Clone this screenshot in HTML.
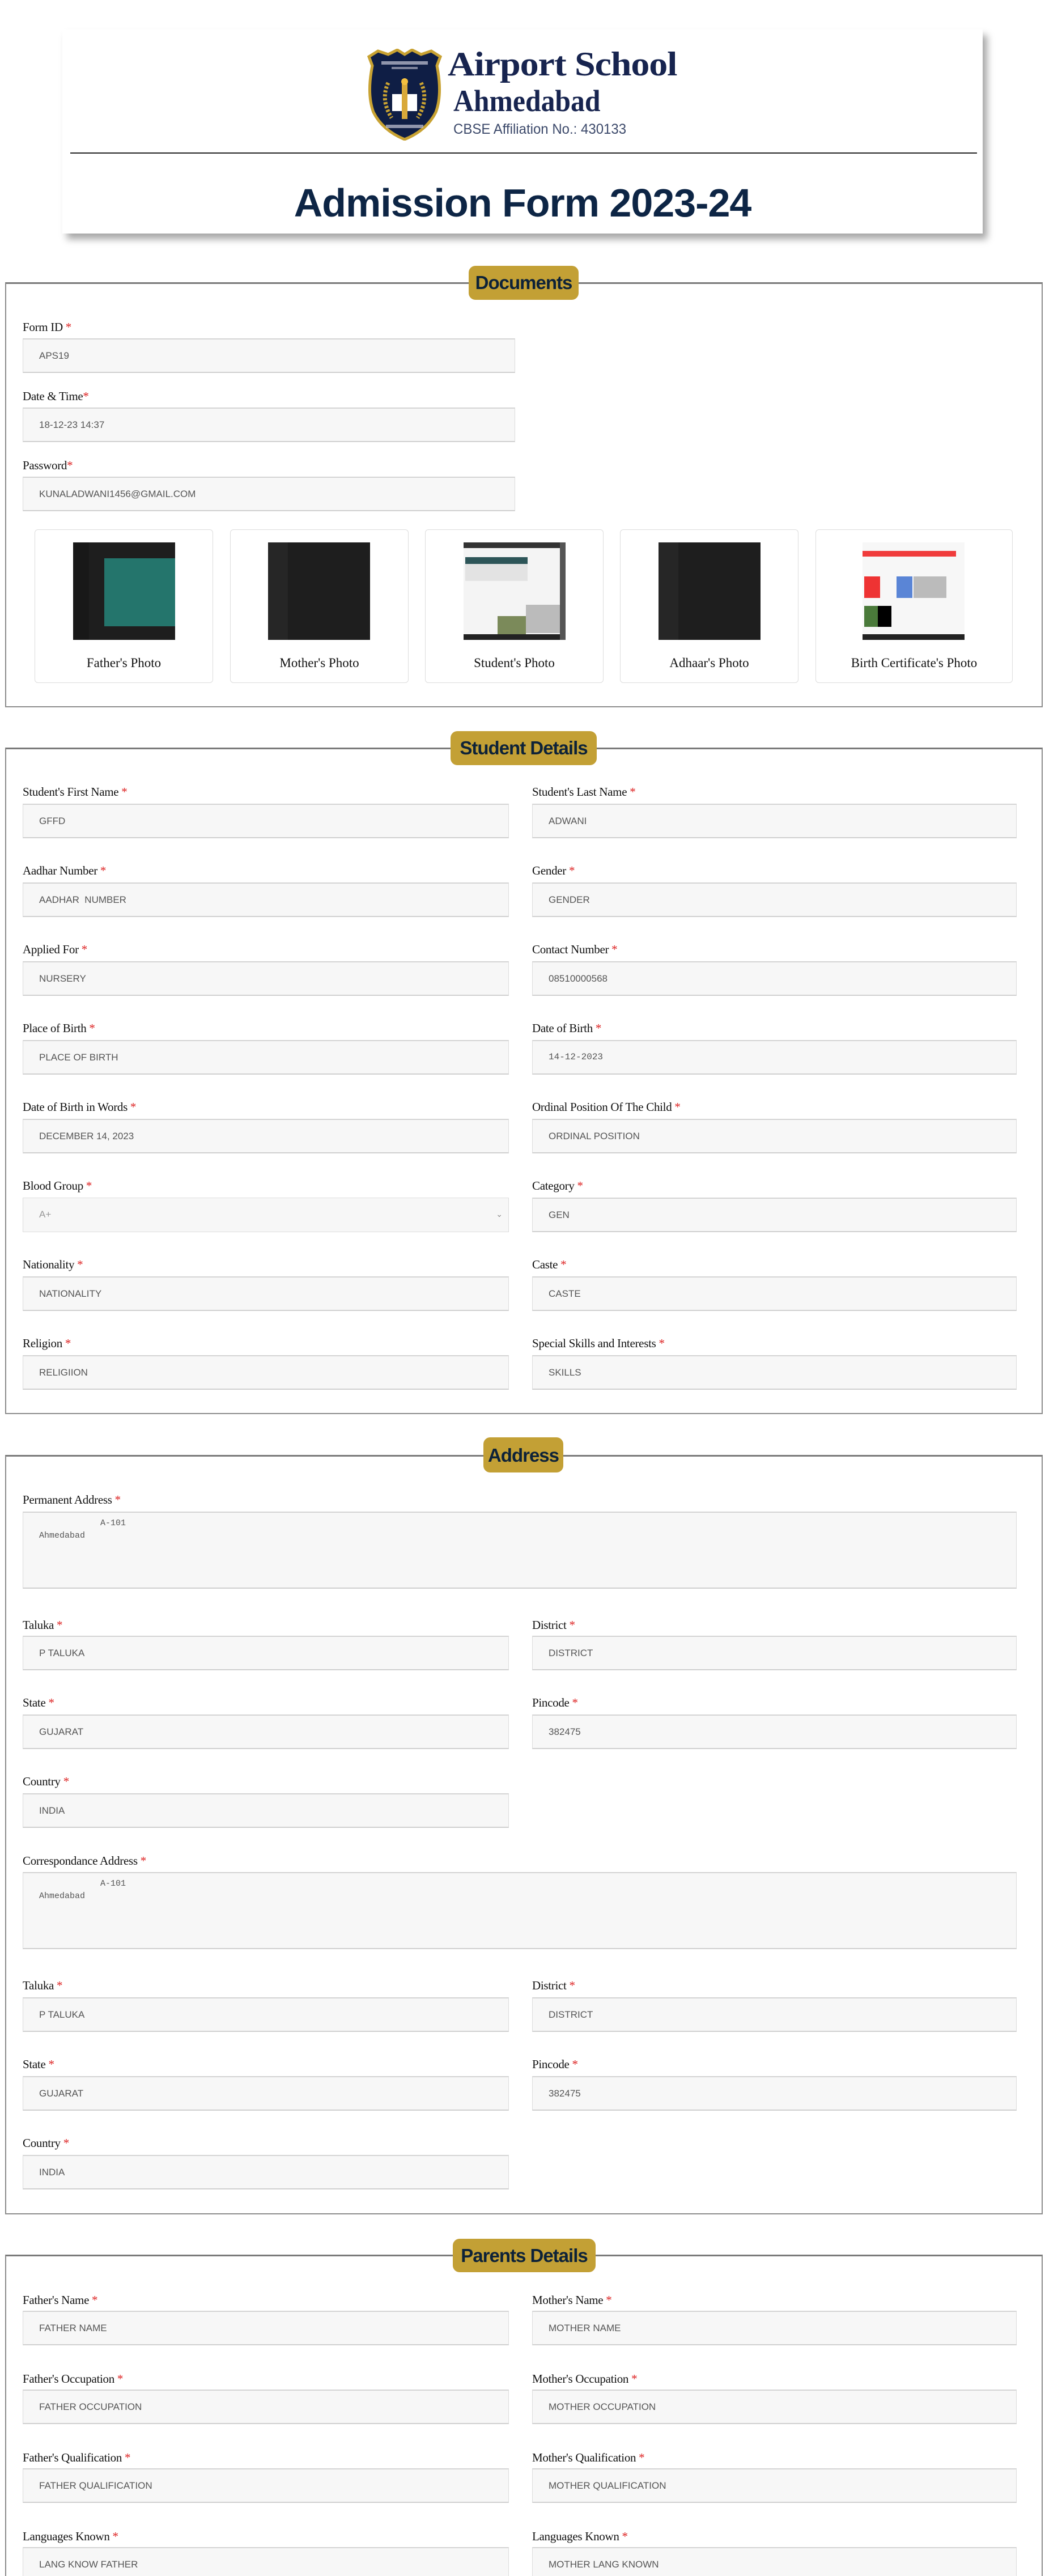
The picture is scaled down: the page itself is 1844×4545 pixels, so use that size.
<!DOCTYPE html>
<html><head><meta charset="utf-8">
<style>
*{box-sizing:border-box;margin:0;padding:0}
html,body{width:1844px;height:4545px;background:#fff;overflow:hidden;position:relative}
.a{position:absolute}
.hdr{left:110px;top:52px;width:1624px;height:360px;background:#fff;box-shadow:8px 10px 12px rgba(0,0,0,.35)}
.fs{position:absolute;left:9px;width:1831px;border:2px solid #8c8c8c;border-top:3px solid #7a7a7a}
.lg{position:absolute;background:#c3a035;border-radius:12px;color:#0d2238;font:bold 33px "Liberation Sans",sans-serif;text-align:center;letter-spacing:-1px}
.lb{position:absolute;font:21px/26px "Liberation Serif",serif;color:#111;letter-spacing:-0.3px}
.lb b{color:#d22;font-weight:normal}
.in{position:absolute;height:61px;background:#f7f7f7;border:1px solid #dcdcdc;border-top:2px solid #d4d4d4;border-bottom:2px solid #d0d0d0;font:17px/57px "Liberation Sans",sans-serif;color:#555;padding-left:28px;white-space:nowrap}
.ta{height:136px;line-height:22px;padding-top:8px;font:15px/22px "Liberation Mono",monospace;white-space:pre}
.card{position:absolute;top:934px;height:271px;border:1px solid #ddd;border-radius:6px;background:#fff}
.img{position:absolute;top:957px;width:180px;height:172px;background:#1e1e1e;overflow:hidden}
.cap{position:absolute;top:1156px;font:23px/28px "Liberation Serif",serif;color:#111;text-align:center}
</style></head><body>

<div class="a hdr"></div>
<svg class="a" style="left:645px;top:86px" width="138" height="162" viewBox="0 0 138 162">
<path d="M6 14 L22 4 L40 10 L56 2 L69 10 L82 2 L98 10 L116 4 L132 14 L126 30 Q136 80 124 112 Q108 144 69 160 Q30 144 14 112 Q2 80 12 30 Z" fill="#0f1e45" stroke="#c8a232" stroke-width="5"/>
<path d="M40 60 Q26 90 46 122" stroke="#c8a232" stroke-width="7" fill="none" stroke-dasharray="4 3"/>
<path d="M98 60 Q112 90 92 122" stroke="#c8a232" stroke-width="7" fill="none" stroke-dasharray="4 3"/>
<rect x="47" y="80" width="44" height="30" fill="#fff"/>
<rect x="64" y="62" width="10" height="62" fill="#d9a93a"/>
<circle cx="69" cy="58" r="6" fill="#f4c040"/>
<rect x="28" y="22" width="82" height="6" fill="#c8c8d8" opacity=".7"/>
<rect x="46" y="32" width="46" height="4" fill="#c8c8d8" opacity=".6"/>
<rect x="36" y="134" width="66" height="6" fill="#c8c8d8" opacity=".7"/>
</svg>
<div class="a" style="left:790px;top:80px;font:bold 60px/66px 'Liberation Serif',serif;color:#17244f;letter-spacing:-1px;transform:scaleX(1.1);transform-origin:left;white-space:nowrap">Airport School</div>
<div class="a" style="left:800px;top:148px;font:bold 54px/60px 'Liberation Serif',serif;color:#17244f;transform:scaleX(.92);transform-origin:left">Ahmedabad</div>
<div class="a" style="left:800px;top:214px;font:25px/28px 'Liberation Sans',sans-serif;color:#3d4a6b;transform:scaleX(.96);transform-origin:left;white-space:nowrap">CBSE Affiliation No.: 430133</div>
<div class="a" style="left:124px;top:269px;width:1600px;height:2px;background:#222"></div>
<div class="a" style="left:0;width:1844px;top:316px;text-align:center;font:bold 70px/84px 'Liberation Sans',sans-serif;color:#0d2545;letter-spacing:-1px">Admission Form 2023-24</div>

<!-- Documents -->
<div class="fs" style="top:498px;height:750px"></div>
<div class="lg" style="left:827px;top:469px;width:194px;height:60px;line-height:60px">Documents</div>
<div class="lb" style="left:40px;top:564px">Form ID <b>*</b></div>
<div class="in" style="left:40px;top:597px;width:869px">APS19</div>
<div class="lb" style="left:40px;top:686px">Date &amp; Time<b>*</b></div>
<div class="in" style="left:40px;top:719px;width:869px">18-12-23 14:37</div>
<div class="lb" style="left:40px;top:808px">Password<b>*</b></div>
<div class="in" style="left:40px;top:841px;width:869px">KUNALADWANI1456@GMAIL.COM</div>

<div class="card" style="left:61px;width:315px"></div>
<div class="card" style="left:406px;width:315px"></div>
<div class="card" style="left:750px;width:315px"></div>
<div class="card" style="left:1094px;width:315px"></div>
<div class="card" style="left:1439px;width:348px"></div>
<div class="img" style="left:129px"><div class="a" style="left:55px;top:28px;width:125px;height:120px;background:#24756c"></div><div class="a" style="left:0;top:0;width:28px;height:172px;background:#181818"></div></div>
<div class="img" style="left:473px"><div class="a" style="left:0;top:0;width:35px;height:172px;background:#262626"></div></div>
<div class="img" style="left:818px;background:#f4f4f4"><div class="a" style="left:0;top:0;width:180px;height:10px;background:#333"></div><div class="a" style="left:3px;top:26px;width:110px;height:12px;background:#2d5558"></div><div class="a" style="left:3px;top:38px;width:110px;height:30px;background:#e3e3e3"></div><div class="a" style="left:60px;top:130px;width:50px;height:40px;background:#7b8a5a"></div><div class="a" style="left:110px;top:110px;width:60px;height:50px;background:#bbb"></div><div class="a" style="left:0;top:162px;width:180px;height:10px;background:#222"></div><div class="a" style="left:170px;top:0;width:10px;height:172px;background:#555"></div></div>
<div class="img" style="left:1162px"><div class="a" style="left:0;top:0;width:35px;height:172px;background:#262626"></div></div>
<div class="img" style="left:1522px;background:#f7f7f7"><div class="a" style="left:0;top:15px;width:165px;height:10px;background:#f03c3c"></div><div class="a" style="left:3px;top:60px;width:28px;height:38px;background:#e33"></div><div class="a" style="left:60px;top:60px;width:28px;height:38px;background:#5a85d6"></div><div class="a" style="left:90px;top:60px;width:58px;height:38px;background:#bbb"></div><div class="a" style="left:3px;top:112px;width:24px;height:37px;background:#4a7a3a"></div><div class="a" style="left:27px;top:112px;width:24px;height:37px;background:#000"></div><div class="a" style="left:0;top:162px;width:180px;height:10px;background:#222"></div></div>
<div class="cap" style="left:61px;width:315px">Father's Photo</div>
<div class="cap" style="left:406px;width:315px">Mother's Photo</div>
<div class="cap" style="left:750px;width:315px">Student's Photo</div>
<div class="cap" style="left:1094px;width:315px">Adhaar's Photo</div>
<div class="cap" style="left:1439px;width:348px">Birth Certificate's Photo</div>

<!-- Student Details -->
<div class="fs" style="top:1319px;height:1176px"></div>
<div class="lg" style="left:795px;top:1290px;width:258px;height:60px;line-height:60px">Student Details</div>

<div class="lb" style="left:40px;top:1384px">Student's First Name <b>*</b></div>
<div class="in" style="left:40px;top:1418px;width:858px">GFFD</div>
<div class="lb" style="left:939px;top:1384px">Student's Last Name <b>*</b></div>
<div class="in" style="left:939px;top:1418px;width:855px">ADWANI</div>

<div class="lb" style="left:40px;top:1523px">Aadhar Number <b>*</b></div>
<div class="in" style="left:40px;top:1557px;width:858px">AADHAR &nbsp;NUMBER</div>
<div class="lb" style="left:939px;top:1523px">Gender <b>*</b></div>
<div class="in" style="left:939px;top:1557px;width:855px">GENDER</div>

<div class="lb" style="left:40px;top:1662px">Applied For <b>*</b></div>
<div class="in" style="left:40px;top:1696px;width:858px">NURSERY</div>
<div class="lb" style="left:939px;top:1662px">Contact Number <b>*</b></div>
<div class="in" style="left:939px;top:1696px;width:855px">08510000568</div>

<div class="lb" style="left:40px;top:1801px">Place of Birth <b>*</b></div>
<div class="in" style="left:40px;top:1835px;width:858px">PLACE OF BIRTH</div>
<div class="lb" style="left:939px;top:1801px">Date of Birth <b>*</b></div>
<div class="in" style="left:939px;top:1835px;width:855px;font-family:'Liberation Mono',monospace;font-size:16px">14-12-2023</div>

<div class="lb" style="left:40px;top:1940px">Date of Birth in Words <b>*</b></div>
<div class="in" style="left:40px;top:1974px;width:858px">DECEMBER 14, 2023</div>
<div class="lb" style="left:939px;top:1940px">Ordinal Position Of The Child <b>*</b></div>
<div class="in" style="left:939px;top:1974px;width:855px">ORDINAL POSITION</div>

<div class="lb" style="left:40px;top:2079px">Blood Group <b>*</b></div>
<div class="in" style="left:40px;top:2113px;width:858px;color:#999;border-top:1px solid #ddd;border-bottom:1px solid #ddd">A+<span class="a" style="right:10px;top:0;color:#888;font-size:14px">&#8964;</span></div>
<div class="lb" style="left:939px;top:2079px">Category <b>*</b></div>
<div class="in" style="left:939px;top:2113px;width:855px">GEN</div>

<div class="lb" style="left:40px;top:2218px">Nationality <b>*</b></div>
<div class="in" style="left:40px;top:2252px;width:858px">NATIONALITY</div>
<div class="lb" style="left:939px;top:2218px">Caste <b>*</b></div>
<div class="in" style="left:939px;top:2252px;width:855px">CASTE</div>

<div class="lb" style="left:40px;top:2357px">Religion <b>*</b></div>
<div class="in" style="left:40px;top:2391px;width:858px">RELIGIION</div>
<div class="lb" style="left:939px;top:2357px">Special Skills and Interests <b>*</b></div>
<div class="in" style="left:939px;top:2391px;width:855px">SKILLS</div>

<!-- Address -->
<div class="fs" style="top:2567px;height:1340px"></div>
<div class="lg" style="left:853px;top:2536px;width:141px;height:62px;line-height:64px">Address</div>

<div class="lb" style="left:40px;top:2633px">Permanent Address <b>*</b></div>
<div class="in ta" style="left:40px;top:2667px;width:1754px">            A-101
Ahmedabad</div>
<div class="lb" style="left:40px;top:2854px">Taluka <b>*</b></div>
<div class="in" style="left:40px;top:2886px;width:858px">P TALUKA</div>
<div class="lb" style="left:939px;top:2854px">District <b>*</b></div>
<div class="in" style="left:939px;top:2886px;width:855px">DISTRICT</div>
<div class="lb" style="left:40px;top:2991px">State <b>*</b></div>
<div class="in" style="left:40px;top:3025px;width:858px">GUJARAT</div>
<div class="lb" style="left:939px;top:2991px">Pincode <b>*</b></div>
<div class="in" style="left:939px;top:3025px;width:855px">382475</div>
<div class="lb" style="left:40px;top:3130px">Country <b>*</b></div>
<div class="in" style="left:40px;top:3164px;width:858px">INDIA</div>

<div class="lb" style="left:40px;top:3270px">Correspondance Address <b>*</b></div>
<div class="in ta" style="left:40px;top:3303px;width:1754px">            A-101
Ahmedabad</div>
<div class="lb" style="left:40px;top:3490px">Taluka <b>*</b></div>
<div class="in" style="left:40px;top:3524px;width:858px">P TALUKA</div>
<div class="lb" style="left:939px;top:3490px">District <b>*</b></div>
<div class="in" style="left:939px;top:3524px;width:855px">DISTRICT</div>
<div class="lb" style="left:40px;top:3629px">State <b>*</b></div>
<div class="in" style="left:40px;top:3663px;width:858px">GUJARAT</div>
<div class="lb" style="left:939px;top:3629px">Pincode <b>*</b></div>
<div class="in" style="left:939px;top:3663px;width:855px">382475</div>
<div class="lb" style="left:40px;top:3768px">Country <b>*</b></div>
<div class="in" style="left:40px;top:3802px;width:858px">INDIA</div>

<!-- Parents -->
<div class="fs" style="top:3978px;height:700px"></div>
<div class="lg" style="left:799px;top:3950px;width:252px;height:59px;line-height:59px">Parents Details</div>

<div class="lb" style="left:40px;top:4045px">Father's Name <b>*</b></div>
<div class="in" style="left:40px;top:4077px;width:858px">FATHER NAME</div>
<div class="lb" style="left:939px;top:4045px">Mother's Name <b>*</b></div>
<div class="in" style="left:939px;top:4077px;width:855px">MOTHER NAME</div>
<div class="lb" style="left:40px;top:4184px">Father's Occupation <b>*</b></div>
<div class="in" style="left:40px;top:4216px;width:858px">FATHER OCCUPATION</div>
<div class="lb" style="left:939px;top:4184px">Mother's Occupation <b>*</b></div>
<div class="in" style="left:939px;top:4216px;width:855px">MOTHER OCCUPATION</div>
<div class="lb" style="left:40px;top:4323px">Father's Qualification <b>*</b></div>
<div class="in" style="left:40px;top:4355px;width:858px">FATHER QUALIFICATION</div>
<div class="lb" style="left:939px;top:4323px">Mother's Qualification <b>*</b></div>
<div class="in" style="left:939px;top:4355px;width:855px">MOTHER QUALIFICATION</div>
<div class="lb" style="left:40px;top:4462px">Languages Known <b>*</b></div>
<div class="in" style="left:40px;top:4494px;width:858px">LANG KNOW FATHER</div>
<div class="lb" style="left:939px;top:4462px">Languages Known <b>*</b></div>
<div class="in" style="left:939px;top:4494px;width:855px">MOTHER LANG KNOWN</div>

</body></html>
